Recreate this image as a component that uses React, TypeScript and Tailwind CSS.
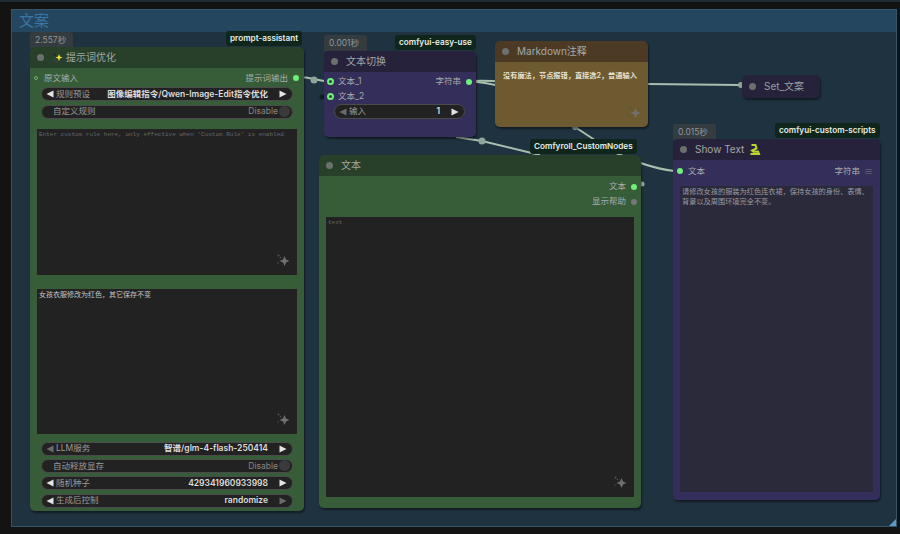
import React from 'react';

const Dot = ({ className = 'bg-[#6b706d]' }: { className?: string }) => (
    <span className={`block w-[7px] h-[7px] rounded-full shrink-0 ${className}`}></span>
);

const Sparkle = () => (
    <svg width="16" height="16" viewBox="0 0 16 16" className="absolute right-[6px] bottom-[7px]" fill="#6f6f6f">
        <path d="M9.5 4 L11 7.5 L14.5 9 L11 10.5 L9.5 14 L8 10.5 L4.5 9 L8 7.5 Z" />
        <circle cx="3.5" cy="3.5" r="1" fill="#555" />
        <circle cx="5.5" cy="5.5" r="0.8" fill="#555" />
        <circle cx="3" cy="11" r="0.7" fill="#555" />
    </svg>
);

const Arrow = ({ dir, dim }: { dir: 'l' | 'r'; dim?: boolean }) => (
    <svg width="8" height="8" viewBox="0 0 8 8" className="shrink-0">
        <path d={dir === 'l' ? 'M7.5 0.5 V7.5 L0.5 4 Z' : 'M0.5 0.5 V7.5 L7.5 4 Z'} fill={dim ? '#6b6b6b' : '#e4e4e4'} />
    </svg>
);

const Combo = ({ label, value, dimLeft, dimRight }: { label: string; value: string; dimLeft?: boolean; dimRight?: boolean }) => (
    <div className="h-[14px] rounded-full bg-[#222] border border-[#4b4b4b] flex items-center pl-[4px] pr-[5px] text-[8.5px]">
        <Arrow dir="l" dim={dimLeft} />
        <span className="ml-[2px] text-[#9a9a9a]">{label}</span>
        <span className="ml-auto mr-[11px] text-[#dddddd] font-semibold">{value}</span>
        <Arrow dir="r" dim={dimRight} />
    </div>
);

const Toggle = ({ label }: { label: string }) => (
    <div className="h-[14px] rounded-full bg-[#222] border border-[#4b4b4b] flex items-center pl-[11px] pr-[2px] text-[8.5px]">
        <span className="text-[#9a9a9a]">{label}</span>
        <span className="ml-auto mr-[1px] text-[#868686]">Disable</span>
        <span className="w-[11px] h-[11px] rounded-full bg-[#3a3a3a]"></span>
    </div>
);

const TextArea = ({ className, children, color = 'text-[#666]' }: { className: string; children?: React.ReactNode; color?: string }) => (
    <div className={`relative bg-[#222] px-[2px] py-[1px] font-['Liberation_Mono','Noto_Sans_CJK_SC',monospace] leading-[10px] ${color} ${className}`}>
        {children}
    </div>
);

const Badge = ({ text, className }: { text: string; className: string }) => (
    <div className={`absolute h-[16px] bg-[#353c40] rounded-t-[3px] text-[#8f9597] text-[8.5px] leading-[16px] px-[5px] ${className}`}>{text}</div>
);

const Tag = ({ text, className }: { text: string; className: string }) => (
    <div className={`absolute z-20 h-[15px] bg-[#10261c] rounded-[3px] text-[#e6eee8] font-semibold text-[8.2px] leading-[15px] px-[4px] whitespace-nowrap ${className}`}>{text}</div>
);

const Node = ({ className, headerClass, bodyClass, title, extra, children }: {
    className: string;
    headerClass: string;
    bodyClass: string;
    title: string;
    extra?: React.ReactNode;
    children?: React.ReactNode;
}) => (
    <div className={`absolute z-10 flex flex-col rounded-[5px] overflow-hidden shadow-[1px_2px_2px_rgba(0,0,0,0.45)] ${className}`}>
        <div className={`h-[21px] shrink-0 flex items-center pl-[7px] ${headerClass}`}>
            <Dot />
            <span className="ml-[8px] text-[10px] text-[#a3a8a5] flex items-center gap-[3px]">{extra}{title}</span>
        </div>
        <div className={`flex-1 min-h-0 flex flex-col ${bodyClass}`}>{children}</div>
    </div>
);

const Slot = ({ label, side, ring }: { label: string; side: 'l' | 'r'; ring?: boolean }) => (
    <div className={`h-[15px] flex items-center text-[8.5px] text-[#a8aca9] ${side === 'r' ? 'justify-end' : ''}`}>
        {side === 'l' && (
            <span className={`w-[7px] h-[7px] rounded-full mr-[4px] ${ring ? 'bg-[#2a4a30] border-[2px] border-[#6ff07a]' : 'bg-[#6ff07a]'}`}></span>
        )}
        <span>{label}</span>
        {side === 'r' && <span className="w-[6px] h-[6px] rounded-full bg-[#6ff07a] ml-[5px]"></span>}
    </div>
);

const Links = () => (
    <svg width="900" height="534" viewBox="0 0 900 534" className="absolute inset-0" fill="none" stroke="#a9bfae" strokeWidth="2">
        <path d="M299 77 C310 77 318 81 332 82" />
        <circle cx="314" cy="80" r="3.5" fill="#8ea69a" stroke="none" />
        <path d="M470 81 C490 83 500 86 520 90" />
        <path d="M470 81 C495 80 510 82 530 86" />
        <path d="M456 137 L482 141 L540 155" />
        <circle cx="482" cy="141" r="3.5" fill="#8ea69a" stroke="none" />
        <path d="M575 127 L610 150 C630 160 650 168 674 171" />
        <circle cx="575" cy="127" r="3" fill="#8ea69a" stroke="none" />
        <path d="M648 84 L740 85" />
        <circle cx="741" cy="85" r="3" fill="#8ea69a" stroke="none" />
        <circle cx="642" cy="184" r="2.5" fill="#9aa" stroke="none" />
        <circle cx="322" cy="97" r="2.5" fill="#0f1b24" stroke="none" />
    </svg>
);

const App: React.FC = () => {
    return (
        <div className="relative w-[900px] h-[534px] overflow-hidden bg-[#131313] font-['Inter','Noto_Sans_CJK_SC',sans-serif]">
            <div className="h-[2px] bg-[#1f2c33]"></div>
            {/* group */}
            <div className="absolute left-[11px] top-[9px] w-[886px] h-[518px] flex flex-col bg-[#1f3240] border border-[#34566b]">
                <div className="h-[22px] bg-[#24465f] text-[#3a76a3] text-[15px] leading-[22px] pl-[7px]">文案</div>
                <div className="absolute right-0 bottom-0 w-0 h-0 border-l-[7px] border-l-transparent border-b-[7px] border-b-[#5b9ac8]"></div>
            </div>

            <Links />

            <Badge text="2.557秒" className="left-[30px] top-[32px] w-[43px]" />
            <Tag text="prompt-assistant" className="left-[226px] top-[31px]" />
            <Node
                className="left-[30px] top-[47px] w-[274px] h-[464px]"
                headerClass="bg-[#28402a]"
                bodyClass="bg-[#365c38] px-[7px]"
                title="提示词优化"
                extra={
                    <svg width="11" height="11" viewBox="0 0 11 11">
                        <path d="M7 2 L8 4.5 L10.5 5.5 L8 6.5 L7 9 L6 6.5 L3.5 5.5 L6 4.5 Z" fill="#f2dc3c" />
                        <circle cx="2.5" cy="2.5" r="1.2" fill="#1c2a3a" />
                        <circle cx="2.5" cy="8" r="1.2" fill="#274c5a" />
                        <circle cx="5" cy="9.8" r="0.8" fill="#7a3540" />
                    </svg>
                }
            >
                <div className="flex items-center justify-between h-[14px] mt-[3px] -ml-[3px] -mr-[2px] text-[8.5px] text-[#a8aca9]">
                    <span className="flex items-center">
                        <span className="w-[4px] h-[4px] rounded-full border border-[#6fae75] mr-[6px]"></span>原文输入
                    </span>
                    <span className="flex items-center">提示词输出<span className="w-[6px] h-[6px] rounded-full bg-[#6ff07a] ml-[5px]"></span></span>
                </div>
                <div className="px-[4px] flex flex-col gap-[3.5px] mt-[2px]">
                    <Combo label="规则预设" value="图像编辑指令/Qwen-Image-Edit指令优化" />
                    <Toggle label="自定义规则" />
                </div>
                <TextArea className="h-[146px] mt-[10px] text-[6px]">Enter custom rule here, only effective when 'Custom Rule' is enabled<Sparkle /></TextArea>
                <TextArea className="h-[145px] mt-[14.5px] text-[7px]" color="text-[#c4c4c4]">女孩衣服修改为红色，其它保存不变<Sparkle /></TextArea>
                <div className="px-[4px] mt-[7.5px] flex flex-col gap-[3.4px]">
                    <Combo label="LLM服务" value="智谱/glm-4-flash-250414" dimLeft />
                    <Toggle label="自动释放显存" />
                    <Combo label="随机种子" value="429341960933998" />
                    <Combo label="生成后控制" value="randomize" dimRight />
                </div>
            </Node>

            <Badge text="0.001秒" className="left-[324px] top-[35px] w-[43px]" />
            <Tag text="comfyui-easy-use" className="left-[395px] top-[35px]" />
            <Node
                className="left-[324px] top-[51px] w-[152px] h-[86px]"
                headerClass="bg-[#26223c]"
                bodyClass="bg-[#332e5a] pl-[3px] pr-[4px] pt-[2px]"
                title="文本切换"
            >
                <div className="flex justify-between">
                    <Slot label="文本_1" side="l" ring />
                    <Slot label="字符串" side="r" />
                </div>
                <Slot label="文本_2" side="l" ring />
                <div className="px-[7px] [&>div]:h-[15px]">
                    <Combo label="输入" value="1" dimLeft />
                </div>
            </Node>

            <Node
                className="left-[495px] top-[41px] w-[153px] h-[86px]"
                headerClass="bg-[#4c3a24]"
                bodyClass="relative bg-[#6e5a30] px-[8px] pt-[8px] text-[7.2px] font-semibold text-[#e6e2d6] leading-[12px] whitespace-nowrap"
                title="Markdown注释"
            >
                没有魔法，节点报错，直接选2，普通输入
                <Sparkle />
            </Node>

            <Tag text="Comfyroll_CustomNodes" className="left-[530px] top-[139px]" />
            <Node
                className="left-[319px] top-[155px] w-[322px] h-[353px]"
                headerClass="bg-[#28402a]"
                bodyClass="bg-[#365c38] px-[7px] pt-[3px]"
                title="文本"
            >
                <div className="flex flex-col items-end -mr-[3px]">
                    <Slot label="文本" side="r" />
                    <div className="h-[15px] flex items-center text-[8.5px] text-[#a8aca9]">
                        显示帮助<span className="w-[6px] h-[6px] rounded-full bg-[#777] ml-[5px]"></span>
                    </div>
                </div>
                <TextArea className="h-[280px] mt-[8px] text-[6px]">text<Sparkle /></TextArea>
            </Node>

            <div className="absolute z-10 left-[742px] top-[75px] w-[78px] h-[23px] rounded-[5px] bg-[#26223c] shadow-[1px_2px_2px_rgba(0,0,0,0.45)] flex items-center pl-[7px] text-[10px] text-[#9a9e9f]">
                <Dot />
                <span className="ml-[8px]">Set_文案</span>
            </div>

            <Badge text="0.015秒" className="left-[673px] top-[124px] w-[43px]" />
            <Tag text="comfyui-custom-scripts" className="left-[775px] top-[123px]" />
            <Node
                className="left-[673px] top-[139px] w-[207px] h-[361px]"
                headerClass="bg-[#26223c]"
                bodyClass="bg-[#332e5a] px-[7px]"
                title="Show Text"
                extra={null}
            >
                <div className="flex items-center h-[18px] mt-[2px] -ml-[3px] text-[8.5px] text-[#a8aca9]">
                    <span className="w-[6px] h-[6px] rounded-full bg-[#6ff07a] mr-[5px]"></span>文本
                    <span className="ml-auto">字符串</span>
                    <span className="ml-[4px] text-[#777] text-[9px] leading-none">≡</span>
                </div>
                <TextArea className="h-[306px] mt-[6px] !bg-[#2b2a3a] text-[7.2px]" color="text-[#9a9aa2]">请修改女孩的服装为红色连衣裙，保持女孩的身份、表情、背景以及周围环境完全不变。</TextArea>
            </Node>
            <svg width="12" height="13" viewBox="0 0 12 13" className="absolute z-20 left-[749px] top-[143px]" fill="none" stroke="#b8d62e" strokeWidth="2">
                <path d="M2.5 2 H6.5 L7.5 5.5 L3 7.5 L4.5 8.8 L9 8.5 L10 11 H1.5" />
            </svg>
        </div>
    );
};

export default App;
